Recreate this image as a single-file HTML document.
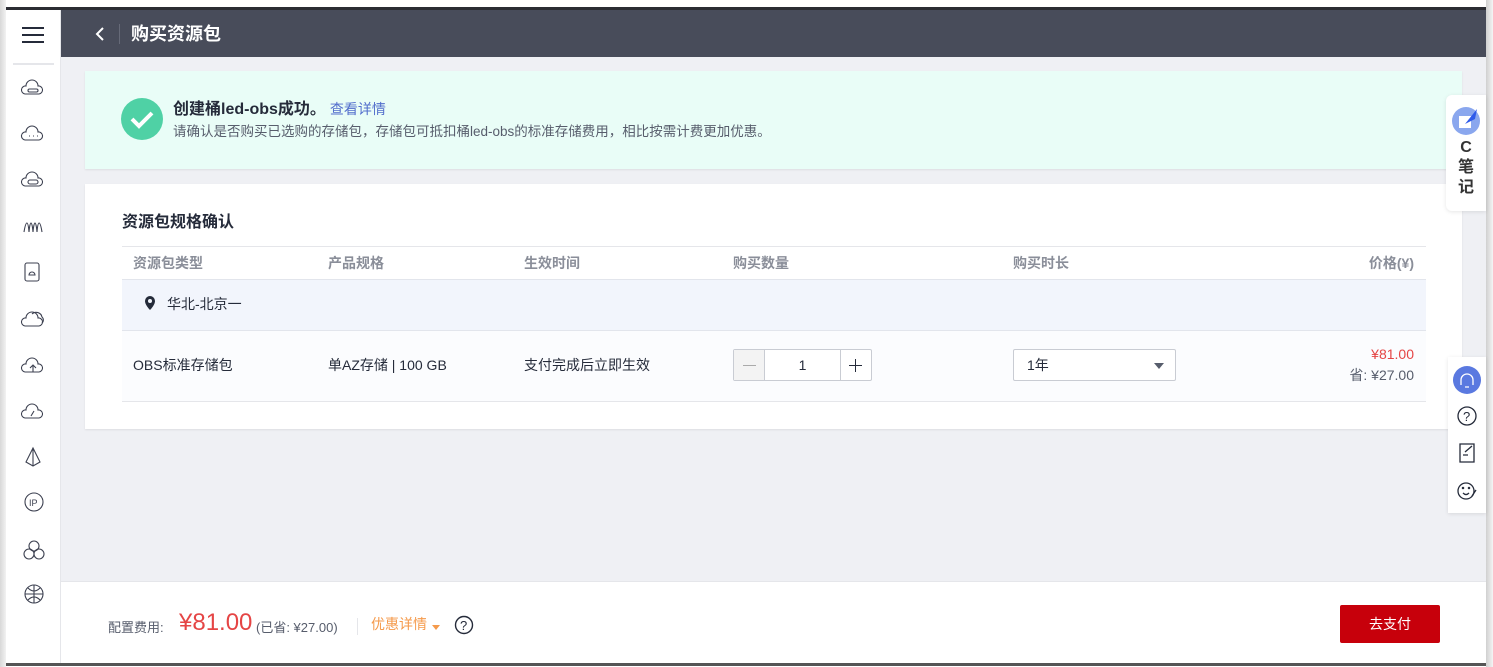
<!DOCTYPE html>
<html><head><meta charset="utf-8"><style>
*{margin:0;padding:0;box-sizing:border-box}
body{width:1493px;height:667px;overflow:hidden;position:relative;background:#fff;font-family:"Liberation Sans","Noto Sans CJK SC",sans-serif;color:#252b3a}
.a{position:absolute}
</style></head><body>
<div class="a" style="left:0;top:0;width:6px;height:667px;background:linear-gradient(to right,#d8d8d8,#f2f2f2)"></div>
<div class="a" style="left:6px;top:7px;width:1480px;height:3px;background:#2b2d33"></div>
<div class="a" style="left:1486px;top:0;width:7px;height:667px;background:linear-gradient(to right,#d0d0d0,#f4f4f4)"></div>
<div class="a" style="left:6px;top:10px;width:55px;height:653px;background:#fff;border-right:1px solid #e5e6ea">
 <div class="a" style="left:16px;top:17px;width:22px;height:2px;background:#252b3a;box-shadow:0 7px 0 #252b3a,0 14px 0 #252b3a"></div>
 <div class="a" style="left:7px;top:53px;width:41px;height:2px;background:#e5e6ea"></div>
</div>
<svg class="a" style="left:6px;top:70px" width="55" height="540" fill="none" stroke="#3c4050" stroke-width="1.1">
 <g transform="translate(16,10)"><path d="M3 14a4 4 0 0 1 1-8 6 6 0 0 1 12 0 4 4 0 0 1 1 8z"/><rect x="6" y="9" width="10" height="3" rx="1.5"/></g>
 <g transform="translate(16,56)"><path d="M3 14a4 4 0 0 1 1-8 6 6 0 0 1 12 0 4 4 0 0 1 1 8z"/><path d="M7 10h1M11 10h1M15 10h1"/></g>
 <g transform="translate(16,102)"><path d="M3 14a4 4 0 0 1 1-8 6 6 0 0 1 12 0 4 4 0 0 1 1 8z"/><rect x="6" y="8" width="10" height="4" rx="2"/></g>
 <g transform="translate(16,148)"><path d="M2 14C4 2 6 2 7 14 8 2 10 2 11 14 12 2 14 2 15 14 16 2 18 2 20 14"/></g>
 <g transform="translate(18,192)"><rect x="1" y="1" width="14" height="18" rx="2"/><path d="M5 13a3 3 0 0 1 6 0z"/></g>
 <g transform="translate(16,240)"><path d="M3 16a4 4 0 0 1 1-8 6 6 0 0 1 12 0 4 4 0 0 1 1 8z"/><path d="M10 4a6 6 0 0 1 10 3 4 4 0 0 1 0 6"/></g>
 <g transform="translate(16,286)"><path d="M3 16a4 4 0 0 1 1-8 6 6 0 0 1 12 0 4 4 0 0 1 1 8z"/><path d="M11 16v-6M8 12l3-3 3 3"/></g>
 <g transform="translate(16,332)"><path d="M3 16a4 4 0 0 1 1-8 6 6 0 0 1 12 0 4 4 0 0 1 1 8z"/><path d="M9 14l3-5"/></g>
 <g transform="translate(18,376)"><path d="M9 2L2 16l7 4 7-4z M9 2v18"/></g>
 <g transform="translate(18,422)"><circle cx="10" cy="10" r="9"/><text x="5" y="14" font-size="9" fill="#3c4050" stroke="none" font-family="Liberation Sans">IP</text></g>
 <g transform="translate(18,470)"><circle cx="10" cy="6" r="5"/><circle cx="5" cy="14" r="5"/><circle cx="15" cy="14" r="5"/></g>
 <g transform="translate(18,514)"><circle cx="10" cy="10" r="9"/><path d="M1 10h18M10 1v18M4 4q6 6 12 0M4 16q6-6 12 0"/></g>
</svg>
<div class="a" style="left:61px;top:10px;width:1425px;height:47px;background:#484c5a"></div>
<svg class="a" style="left:94px;top:26px" width="12" height="16" fill="none" stroke="#fff" stroke-width="2"><path d="M9 2L3 8l6 6"/></svg>
<div class="a" style="left:119px;top:24px;width:1px;height:20px;background:#666a78"></div>
<div class="a" style="left:131px;top:23px;color:#fff;font-size:18px;font-weight:bold;line-height:22px">购买资源包</div>
<div class="a" style="left:61px;top:57px;width:1425px;height:524px;background:#eff0f4"></div>
<div class="a" style="left:85px;top:71px;width:1377px;height:98px;background:#e9fdf7;box-shadow:0 1px 2px rgba(0,0,0,.08)"></div>
<svg class="a" style="left:121px;top:98px" width="42" height="42"><circle cx="21" cy="21" r="21" fill="#4fd1a5"/><path d="M11 21l7 7 13-13" fill="none" stroke="#fff" stroke-width="4"/></svg>
<div class="a" style="left:173px;top:99px;font-size:16px;font-weight:bold;line-height:20px">创建桶led-obs成功。<span style="font-weight:normal;color:#526ecc;font-size:14px;margin-left:4px">查看详情</span></div>
<div class="a" style="left:173px;top:123px;font-size:13.5px;color:#575d6c;line-height:18px">请确认是否购买已选购的存储包，存储包可抵扣桶led-obs的标准存储费用，相比按需计费更加优惠。</div>
<div class="a" style="left:85px;top:184px;width:1377px;height:245px;background:#fff;box-shadow:0 1px 2px rgba(0,0,0,.08)"></div>
<div class="a" style="left:122px;top:213px;font-size:16px;font-weight:bold;line-height:20px">资源包规格确认</div>
<div class="a" style="left:122px;top:246px;width:1304px;height:1px;background:#e5e6ea"></div>
<div class="a" style="left:122px;top:279px;width:1304px;height:52px;background:#f2f5fc;border-top:1px solid #e2e5ec;border-bottom:1px solid #e2e5ec"></div>
<div class="a" style="left:122px;top:331px;width:1304px;height:71px;background:#fbfcfe;border-bottom:1px solid #e5e6ea"></div>
<div class="a" style="top:254px;left:133px;font-size:14px;color:#8a8e99;font-weight:bold;line-height:18px">资源包类型</div>
<div class="a" style="top:254px;left:328px;font-size:14px;color:#8a8e99;font-weight:bold;line-height:18px">产品规格</div>
<div class="a" style="top:254px;left:524px;font-size:14px;color:#8a8e99;font-weight:bold;line-height:18px">生效时间</div>
<div class="a" style="top:254px;left:733px;font-size:14px;color:#8a8e99;font-weight:bold;line-height:18px">购买数量</div>
<div class="a" style="top:254px;left:1013px;font-size:14px;color:#8a8e99;font-weight:bold;line-height:18px">购买时长</div>
<div class="a" style="top:254px;right:79px;font-size:14px;color:#8a8e99;font-weight:bold;line-height:18px">价格(¥)</div>
<svg class="a" style="left:144px;top:296px" width="12" height="15"><path d="M6 0a5 5 0 0 0-5 5c0 4 5 9 5 9s5-5 5-9a5 5 0 0 0-5-5z" fill="#252b3a"/><circle cx="6" cy="5" r="2" fill="#f2f5fc"/></svg>
<div class="a" style="left:167px;top:295px;font-size:14px;line-height:18px">华北-北京一</div>
<div class="a" style="left:133px;top:356px;font-size:14px;line-height:18px">OBS标准存储包</div>
<div class="a" style="left:328px;top:356px;font-size:14px;line-height:18px">单AZ存储 | 100 GB</div>
<div class="a" style="left:524px;top:356px;font-size:14px;line-height:18px">支付完成后立即生效</div>
<div class="a" style="left:733px;top:349px;width:139px;height:32px;border:1px solid #c9ccd3;border-radius:2px;background:#fff">
 <div class="a" style="left:0;top:0;width:31px;height:30px;background:#f3f3f3;border-right:1px solid #c9ccd3"></div>
 <div class="a" style="left:9px;top:15px;width:13px;height:1px;background:#aaa"></div>
 <div class="a" style="left:106px;top:0;width:1px;height:30px;background:#c9ccd3"></div>
 <div class="a" style="left:115px;top:15px;width:13px;height:1.2px;background:#252b3a"></div>
 <div class="a" style="left:121px;top:9px;width:1.2px;height:13px;background:#252b3a"></div>
 <div class="a" style="left:31px;width:75px;top:6px;text-align:center;font-size:14px;line-height:18px">1</div>
</div>
<div class="a" style="left:1013px;top:349px;width:163px;height:32px;border:1px solid #c9ccd3;border-radius:2px;background:#fff">
 <div class="a" style="left:13px;top:6px;font-size:14px;line-height:18px">1年</div>
 <div class="a" style="left:140px;top:13px;width:0;height:0;border-left:5px solid transparent;border-right:5px solid transparent;border-top:6px solid #575d6c"></div>
</div>
<div class="a" style="right:79px;top:346px;font-size:14px;color:#e54545;line-height:17px">¥81.00</div>
<div class="a" style="right:79px;top:367px;font-size:14px;color:#575d6c;line-height:17px">省: ¥27.00</div>
<div class="a" style="left:1446px;top:95px;width:40px;height:116px;background:#fff;border-radius:6px 0 0 6px;box-shadow:0 1px 4px rgba(0,0,0,.1)"></div>
<svg class="a" style="left:1451px;top:106px" width="30" height="30"><circle cx="15" cy="15" r="14" fill="#8aa7ee"/><rect x="8" y="10" width="12" height="12" fill="#fff"/><path d="M14 18L26 3l-2 10z" fill="#2f5bea"/></svg>
<div class="a" style="left:1446px;top:138px;width:40px;text-align:center;font-size:16px;font-weight:bold;line-height:20px;color:#333">C<br>笔<br>记</div>
<div class="a" style="left:1448px;top:357px;width:38px;height:156px;background:#fff;box-shadow:0 1px 4px rgba(0,0,0,.1)"></div>
<svg class="a" style="left:1452px;top:366px" width="30" height="140" fill="none" stroke="#252b3a" stroke-width="1.3">
 <circle cx="15" cy="14" r="14" fill="#5a79e0" stroke="none"/>
 <path d="M9 18v-4a6 6 0 0 1 12 0v4M9 16v3M21 16v3M13 21h4" stroke="#fff"/>
 <circle cx="15" cy="50" r="9"/><text x="11" y="55" font-size="13" fill="#252b3a" stroke="none" font-family="Liberation Sans">?</text>
 <path d="M8 78h14v18H8zM11 89h5M20 80l-7 6"/>
 <circle cx="14" cy="125" r="8"/><path d="M11 127q3 3 6 0M20 130l4-6"/><circle cx="11" cy="122" r=".6"/><circle cx="17" cy="122" r=".6"/>
</svg>
<div class="a" style="left:61px;top:581px;width:1425px;height:82px;background:#fff;border-top:1px solid #e5e6ea"></div>
<div class="a" style="left:6px;top:663px;width:1480px;height:3px;background:#555"></div>
<div class="a" style="left:108px;top:619px;font-size:13px;color:#575d6c;line-height:18px">配置费用:</div>
<div class="a" style="left:179px;top:609px;font-size:24px;color:#e54545;line-height:28px">¥81.00</div>
<div class="a" style="left:256px;top:619px;font-size:13px;color:#575d6c;line-height:18px">(已省: ¥27.00)</div>
<div class="a" style="left:357px;top:618px;width:1px;height:17px;background:#e5e6ea"></div>
<div class="a" style="left:371px;top:615px;font-size:14px;color:#f59a4b;line-height:18px">优惠详情</div>
<div class="a" style="left:432px;top:625px;width:0;height:0;border-left:4px solid transparent;border-right:4px solid transparent;border-top:5px solid #f59a4b"></div>
<svg class="a" style="left:454px;top:615px" width="20" height="20"><circle cx="10" cy="10" r="8.5" fill="none" stroke="#252b3a" stroke-width="1.4"/><text x="6" y="15" font-size="13" fill="#252b3a" font-family="Liberation Sans">?</text></svg>
<div class="a" style="left:1340px;top:605px;width:100px;height:38px;background:#c7000b;border-radius:2px;color:#fff;font-size:14px;text-align:center;line-height:38px">去支付</div>
</body></html>
